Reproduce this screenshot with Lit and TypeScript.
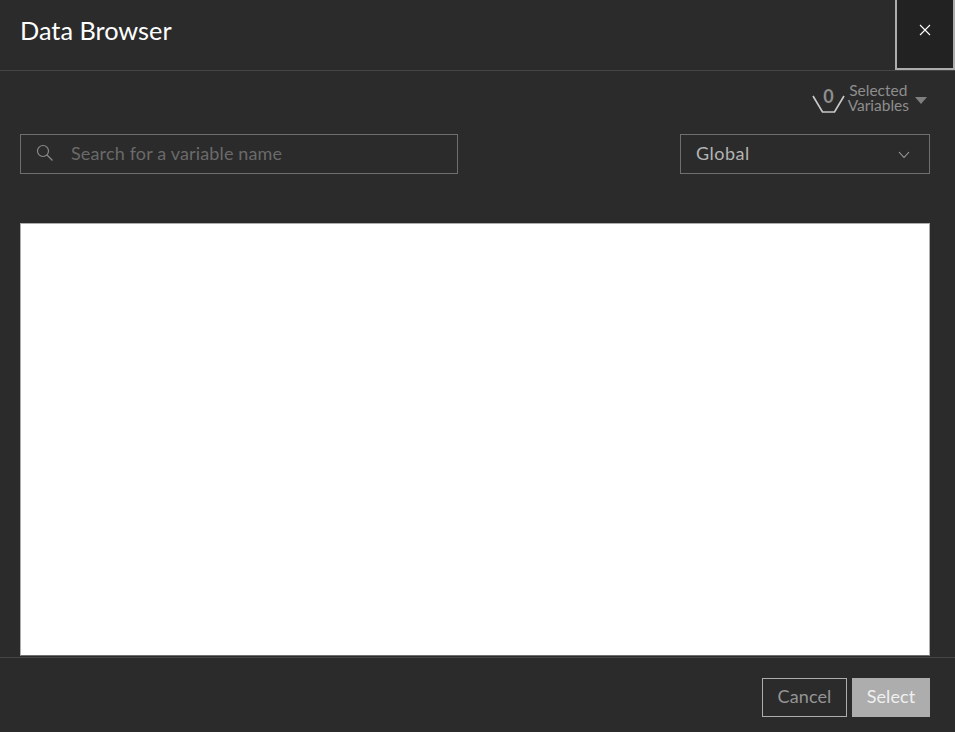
import { LitElement, html, css } from "lit";
import { customElement } from "lit/decorators.js";

@customElement("app-root")
export class AppRoot extends LitElement {
  static styles = css`
    :host {
      display: block;
      height: 732px;
      background: #2b2b2b;
      font-family: Lato, "Noto Sans", sans-serif;
      color: #fff;
      overflow: hidden;
    }
    .dialog {
      display: flex;
      flex-direction: column;
      height: 732px;
    }
    .header {
      display: flex;
      align-items: stretch;
      justify-content: space-between;
      height: 70px;
      flex: none;
      border-bottom: 1px solid #454545;
    }
    .title {
      font-size: 25.3px;
      line-height: 61px;
      padding-left: 20px;
      color: #fff;
    }
    .close {
      width: 60px;
      height: 70px;
      box-sizing: border-box;
      border: 2px solid #adadad;
      border-top: none;
      background: #222;
      display: flex;
      align-items: center;
      justify-content: center;
      padding: 0 0 8px;
    }
    .content {
      flex: 1;
      display: flex;
      flex-direction: column;
      padding: 0 25px 0 20px;
      min-height: 0;
    }
    .selected-row {
      display: flex;
      justify-content: flex-end;
      height: 63px;
      flex: none;
    }
    .selected {
      display: flex;
      align-items: flex-start;
      padding-top: 12px;
      color: #8e8e8e;
    }
    .basket {
      margin-top: 3px;
      margin-right: 3px;
    }
    .selected-text {
      font-size: 15.5px;
      line-height: 15px;
      text-align: center;
    }
    .caret {
      width: 0;
      height: 0;
      margin: 14px 3px 0 6px;
      border-left: 6px solid transparent;
      border-right: 6px solid transparent;
      border-top: 7px solid #7f7f7f;
    }
    .filters {
      display: flex;
      justify-content: space-between;
      flex: none;
    }
    .search,
    .scope {
      height: 40px;
      box-sizing: border-box;
      border: 1px solid #6f6f6f;
      display: flex;
      align-items: center;
      font-size: 18px;
      padding-bottom: 3px;
    }
    .search {
      width: 438px;
      padding-left: 15px;
      color: #6a6a6a;
      letter-spacing: 0.15px;
    }
    .search svg {
      margin-right: 17px;
      flex: none;
    }
    .scope {
      width: 250px;
      padding-left: 15px;
      padding-right: 19px;
      justify-content: space-between;
      color: #b4b4b4;
      letter-spacing: 0.5px;
    }
    .scope svg {
      margin-top: 4px;
    }
    .results {
      flex: 1;
      margin-top: 49px;
      background: #fff;
      border: 1px solid #adadad;
      border-bottom-color: #6f6f6f;
    }
    .footer {
      flex: none;
      height: 75px;
      border-top: 1px solid #454545;
      display: flex;
      justify-content: flex-end;
      gap: 5px;
      padding: 20px 25px 0 0;
      box-sizing: border-box;
      margin-top: 1px;
    }
    .btn {
      height: 39px;
      box-sizing: border-box;
      display: flex;
      align-items: center;
      justify-content: center;
      font-size: 18px;
      padding-bottom: 4px;
      letter-spacing: 0.1px;
    }
    .cancel {
      width: 85px;
      border: 1px solid #adadad;
      color: #959595;
    }
    .select {
      width: 78px;
      background: #adadad;
      color: #f0f0f0;
    }
  `;

  render() {
    return html`
      <div class="dialog">
        <div class="header">
          <div class="title">Data Browser</div>
          <div class="close">
            <svg width="12" height="12" viewBox="0 0 12 12">
              <path d="M1 1 L11 11 M11 1 L1 11" stroke="#fff" stroke-width="1.1" fill="none" />
            </svg>
          </div>
        </div>
        <div class="content">
          <div class="selected-row">
            <div class="selected">
              <svg class="basket" width="33" height="28" viewBox="0 0 33 28">
                <path d="M1 10 L10.5 26 H22.5 L32 10" stroke="#c8c8c8" stroke-width="1.7" fill="none" />
                <text x="16.5" y="17" text-anchor="middle" font-size="18" font-weight="700" fill="#8e8e8e">0</text>
              </svg>
              <div class="selected-text">Selected<br />Variables</div>
              <div class="caret"></div>
            </div>
          </div>
          <div class="filters">
            <div class="search">
              <svg width="18" height="18" viewBox="0 0 18 18">
                <circle cx="7" cy="7" r="5.5" stroke="#8a8a8a" stroke-width="1.2" fill="none" />
                <path d="M11 11 L16.5 16.5" stroke="#8a8a8a" stroke-width="1.3" fill="none" />
              </svg>
              Search for a variable name
            </div>
            <div class="scope">
              Global
              <svg width="12" height="8" viewBox="0 0 12 8">
                <path d="M1 1 L6 6.5 L11 1" stroke="#a0a0a0" stroke-width="1.1" fill="none" />
              </svg>
            </div>
          </div>
          <div class="results"></div>
        </div>
        <div class="footer">
          <div class="btn cancel">Cancel</div>
          <div class="btn select">Select</div>
        </div>
      </div>
    `;
  }
}
